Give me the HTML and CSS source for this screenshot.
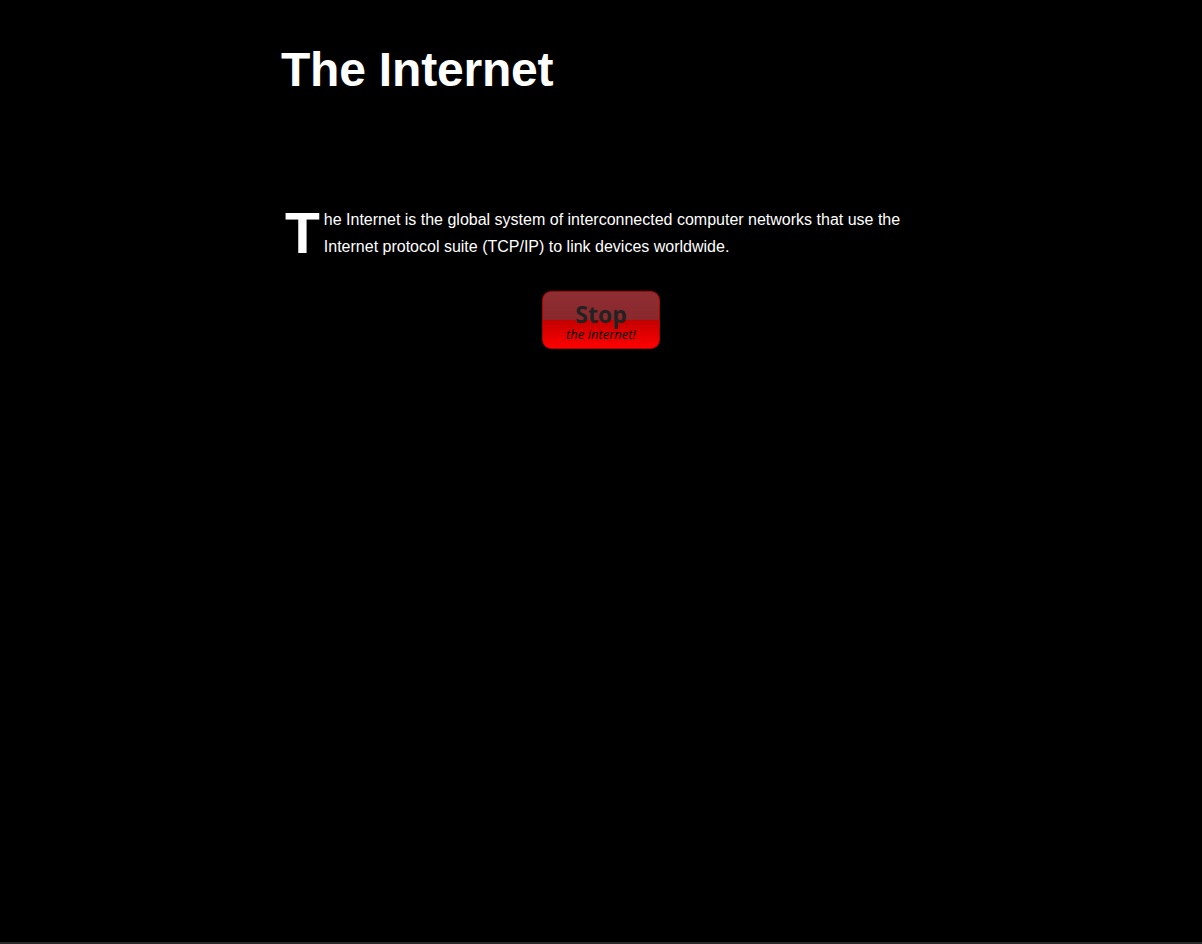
FILE: index.html
```html
<!DOCTYPE html>
<html>
<head>
<meta charset="utf-8">
<link rel="stylesheet" href="styles.css">
</head>
<body>
<div class="page">
  <h1 class="title">The Internet</h1>
  <p class="intro"><span class="dropcap">T</span>he Internet is the global system of interconnected computer networks that use the Internet protocol suite (TCP/IP) to link devices worldwide.</p>
  <div class="actions">
    <button class="stop" type="button"><span class="stop-main">Stop</span><span class="stop-sub">the internet!</span></button>
  </div>
</div>
</body>
</html>
```
FILE: styles.css
```css
html, body {
  margin: 0;
  padding: 0;
  background: #000;
  height: 100%;
}
body {
  color: #fff;
  font-family: "Liberation Sans", Arial, sans-serif;
  border-bottom: 2px solid #2a2a2a;
  box-sizing: border-box;
}
.page {
  width: 640px;
  margin: 0 auto;
  padding-top: 1px;
}
.title {
  font-size: 48px;
  font-weight: bold;
  margin: 41px 0 0 0;
  line-height: 56px;
  letter-spacing: -0.2px;
}
.intro {
  margin: 108px 0 0 0;
  font-size: 16px;
  line-height: 27px;
}
.dropcap {
  float: left;
  font-size: 57px;
  font-weight: bold;
  line-height: 46px;
  margin: 4px 4px 0 4px;
}
.actions {
  display: flex;
  justify-content: center;
  margin-top: 31px;
}
.stop {
  width: 118px;
  height: 58px;
  border: 1px solid #b00000;
  border-radius: 9px;
  background: linear-gradient(to bottom, #8e2e33 0%, #8a282c 49%, #c40000 51%, #ff0000 100%);
  display: flex;
  flex-direction: column;
  align-items: center;
  justify-content: flex-start;
  padding: 10px 0 0 0;
  cursor: pointer;
}
.stop-main {
  font-family: "Open Sans", "DejaVu Sans", sans-serif;
  font-weight: bold;
  font-size: 23px;
  line-height: 24px;
  color: #222;
}
.stop-sub {
  font-family: "Open Sans", "DejaVu Sans", sans-serif;
  font-style: italic;
  font-size: 13px;
  line-height: 14px;
  color: #000;
  margin-top: 1px;
}
```
